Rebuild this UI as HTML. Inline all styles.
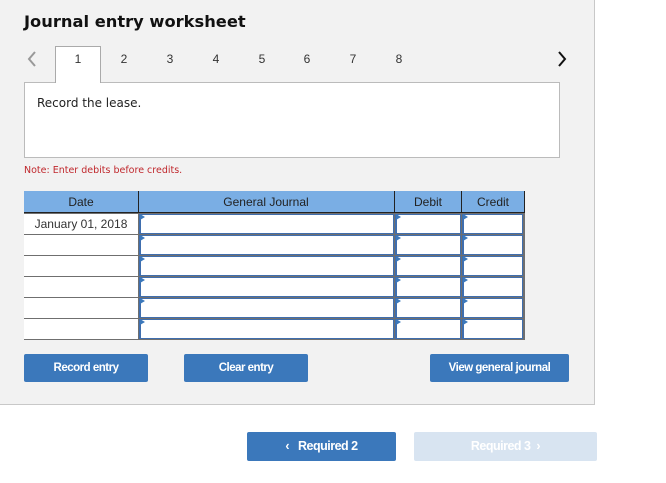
<!DOCTYPE html>
<html><head><style>
*{margin:0;padding:0;box-sizing:border-box}
body{width:666px;height:483px;background:#fff;font-family:"Liberation Sans",sans-serif;position:relative;overflow:hidden}
.panel{position:absolute;left:0;top:0;width:595px;height:405px;background:#f2f2f2;border-right:1px solid #c8c8c8;border-bottom:1px solid #c8c8c8}
.abs{position:absolute}
h1{position:absolute;left:24px;top:12px;font-family:"DejaVu Sans",sans-serif;font-size:16.3px;font-weight:bold;color:#111}
.tab{position:absolute;top:52px;font-size:12px;color:#333;width:20px;text-align:center}
.box{position:absolute;left:24px;top:82px;width:536px;height:76px;background:#fff;border:1px solid #bbb}
.btn{position:absolute;background:#3b78bb;color:#fff;font-weight:bold;font-size:11.5px;letter-spacing:-0.5px;text-align:center;border-radius:2px}
.cell{position:absolute;background:#fff}
.tri{position:absolute;width:0;height:0;border-top:3px solid transparent;border-bottom:3px solid transparent;border-left:5px solid #3b78bb}
</style></head><body>
<div class="panel"></div>
<h1>Journal entry worksheet</h1>
<svg class="abs" style="left:27px;top:51px" width="10" height="16"><path d="M8 1 L2 8 L8 15" stroke="#999" stroke-width="2" fill="none"/></svg>
<div class="abs" style="left:55px;top:46px;width:46px;height:37px;background:#fff;border:1px solid #aaa;border-bottom:none;z-index:2"></div>
<div class="tab" style="left:68px;z-index:3">1</div>
<div class="tab" style="left:114px">2</div>
<div class="tab" style="left:160px">3</div>
<div class="tab" style="left:206px">4</div>
<div class="tab" style="left:252px">5</div>
<div class="tab" style="left:297px">6</div>
<div class="tab" style="left:343px">7</div>
<div class="tab" style="left:389px">8</div>
<svg class="abs" style="left:557px;top:51px" width="10" height="16"><path d="M2 1 L8 8 L2 15" stroke="#111" stroke-width="2" fill="none"/></svg>
<div class="box"><div style="position:absolute;left:12px;top:13px;font-family:'DejaVu Sans',sans-serif;font-size:12px;color:#222">Record the lease.</div></div>
<div class="abs" style="left:24px;top:165px;font-family:'DejaVu Sans',sans-serif;font-size:9.5px;color:#c0282d">Note: Enter debits before credits.</div>

<div class="abs" style="left:24px;top:191px;width:501px;height:22px;background:#7aaee4;border-bottom:1px solid #222"></div>
<div class="abs" style="left:138px;top:191px;width:1px;height:22px;background:#222"></div>
<div class="abs" style="left:394px;top:191px;width:1px;height:22px;background:#222"></div>
<div class="abs" style="left:461px;top:191px;width:1px;height:22px;background:#222"></div>
<div class="abs" style="left:524px;top:191px;width:1px;height:22px;background:#222"></div>
<div class="abs" style="left:24px;top:195px;width:114px;text-align:center;font-size:12px;color:#222">Date</div>
<div class="abs" style="left:138px;top:195px;width:256px;text-align:center;font-size:12px;color:#222">General Journal</div>
<div class="abs" style="left:395px;top:195px;width:66px;text-align:center;font-size:12px;color:#222">Debit</div>
<div class="abs" style="left:462px;top:195px;width:62px;text-align:center;font-size:12px;color:#222">Credit</div>

<div class="abs" style="left:24px;top:213px;width:501px;height:127px;background:#6f6f6f"></div>
<div id="rows"></div>
<script>
var h='';for(var i=0;i<6;i++){var y=214+i*21;
h+='<div class="cell" style="left:24px;top:'+y+'px;width:114px;height:20px;'+(i==0?'text-align:center;font-size:12px;color:#333;padding-top:3px':'')+'">'+(i==0?'January 01, 2018':'')+'</div>';
[[139,255],[395,66],[462,61]].forEach(function(c){h+='<div class="abs" style="left:'+c[0]+'px;top:'+y+'px;width:'+c[1]+'px;height:20px;background:#3f6eae"></div><div class="cell" style="left:'+(c[0]+2)+'px;top:'+(y+1)+'px;width:'+(c[1]-3)+'px;height:18px"></div><div class="tri" style="left:'+(c[0]+1)+'px;top:'+(y)+'px"></div>';});}
document.getElementById('rows').innerHTML=h;
</script>

<div class="btn" style="left:24px;top:354px;width:124px;height:28px;line-height:28px">Record entry</div>
<div class="btn" style="left:184px;top:354px;width:124px;height:28px;line-height:28px">Clear entry</div>
<div class="btn" style="left:430px;top:354px;width:139px;height:28px;line-height:28px">View general journal</div>
<div class="btn" style="left:247px;top:432px;width:149px;height:29px;line-height:29px;font-size:12.5px">&#8249;&nbsp;&nbsp; Required 2</div>
<div class="btn" style="left:414px;top:432px;width:183px;height:29px;line-height:29px;font-size:12.5px;background:#d8e4f1;color:#fff">Required 3 &nbsp;&#8250;</div>
</body></html>
